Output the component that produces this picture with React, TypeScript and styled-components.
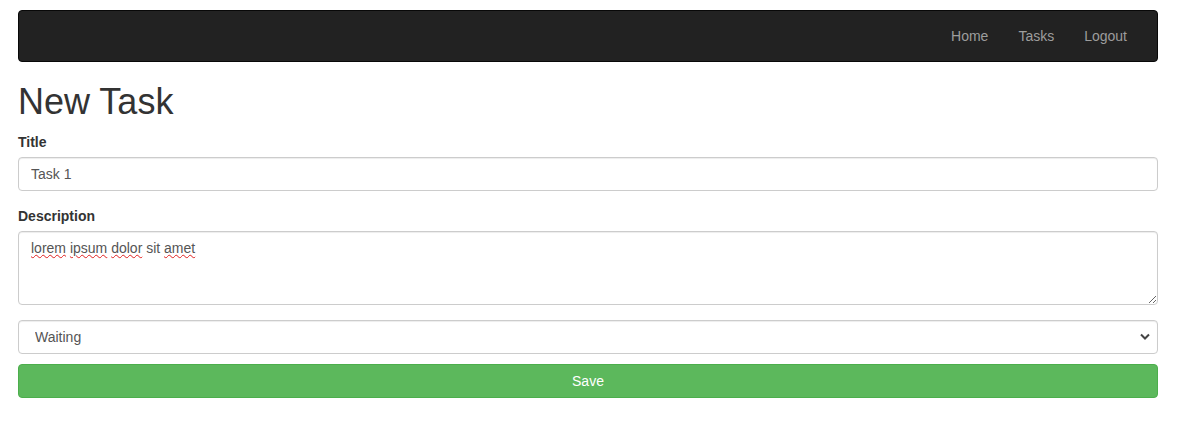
import React from 'react';
import styled, { createGlobalStyle } from 'styled-components';

const GlobalStyle = createGlobalStyle`
   * {
      box-sizing: border-box;
   }
   body {
      margin: 0;
      background: #fff;
      font-family: "Liberation Sans", Arial, Helvetica, sans-serif;
      font-size: 14px;
      line-height: 20px;
      color: #333;
   }
`;

const Page = styled.div`
   width: 1140px;
   margin: 10px 0 0 18px;
`;

const Navbar = styled.nav`
   display: flex;
   justify-content: flex-end;
   min-height: 52px;
   background-color: #222;
   border: 1px solid #080808;
   border-radius: 4px;
   padding-right: 15px;
`;

const NavLink = styled.a`
   display: block;
   padding: 15px;
   line-height: 20px;
   color: #9d9d9d;
   text-decoration: none;
   font-size: 14px;
`;

const Heading = styled.h1`
   margin: 20px 0 10px;
   font-size: 36px;
   font-weight: 500;
   line-height: 39.6px;
   color: #333;
`;

const FormGroup = styled.div<{ $spacing?: number }>`
   margin-bottom: ${({ $spacing }) => ($spacing ?? 15)}px;
`;

const Label = styled.label`
   display: block;
   margin-bottom: 5px;
   font-weight: 700;
   font-size: 14px;
   line-height: 20px;
`;

const fieldBase = `
   display: block;
   width: 100%;
   padding: 6px 12px;
   font-family: "Liberation Sans", Arial, Helvetica, sans-serif;
   font-size: 14px;
   line-height: 20px;
   color: #555;
   background-color: #fff;
   border: 1px solid #ccc;
   border-radius: 4px;
   box-shadow: inset 0 1px 1px rgba(0, 0, 0, 0.075);
   outline: none;
`;

const TextField = styled.input`
   ${fieldBase}
   height: 34px;
`;

const TextBox = styled.div`
   ${fieldBase}
   height: 74px;
   resize: vertical;
   overflow: auto;
`;

const Misspelled = styled.span`
   text-decoration: underline wavy #e0201f;
   text-decoration-thickness: 1px;
   text-underline-offset: 1px;
`;

const SelectWrap = styled.div`
   position: relative;
`;

const Select = styled.select`
   ${fieldBase}
   height: 34px;
   padding-left: 16px;
   appearance: none;
   -webkit-appearance: none;
`;

const Chevron = styled.svg`
   position: absolute;
   right: 8px;
   top: 13px;
   pointer-events: none;
`;

const SaveButton = styled.button`
   display: block;
   width: 100%;
   height: 34px;
   padding: 6px 12px;
   font-family: "Liberation Sans", Arial, Helvetica, sans-serif;
   font-size: 14px;
   line-height: 20px;
   color: #fff;
   background-color: #5cb85c;
   border: 1px solid #4cae4c;
   border-radius: 4px;
   cursor: pointer;
`;

export default function App() {
   return (
      <>
         <GlobalStyle />
         <Page>
            <Navbar>
               <NavLink href="#">Home</NavLink>
               <NavLink href="#">Tasks</NavLink>
               <NavLink href="#">Logout</NavLink>
            </Navbar>
            <Heading>New Task</Heading>
            <FormGroup>
               <Label htmlFor="title">Title</Label>
               <TextField id="title" defaultValue="Task 1" />
            </FormGroup>
            <FormGroup>
               <Label>Description</Label>
               <TextBox role="textbox">
                  <Misspelled>lorem</Misspelled> <Misspelled>ipsum</Misspelled>{' '}
                  <Misspelled>dolor</Misspelled> sit <Misspelled>amet</Misspelled>
               </TextBox>
            </FormGroup>
            <FormGroup $spacing={10}>
               <SelectWrap>
                  <Select defaultValue="waiting">
                     <option value="waiting">Waiting</option>
                     <option value="progress">In progress</option>
                     <option value="done">Done</option>
                  </Select>
                  <Chevron width="10" height="8" viewBox="0 0 10 8">
                     <path d="M1 1.5 L5 5.5 L9 1.5" fill="none" stroke="#444" strokeWidth="2" />
                  </Chevron>
               </SelectWrap>
            </FormGroup>
            <SaveButton type="button">Save</SaveButton>
         </Page>
      </>
   );
}
